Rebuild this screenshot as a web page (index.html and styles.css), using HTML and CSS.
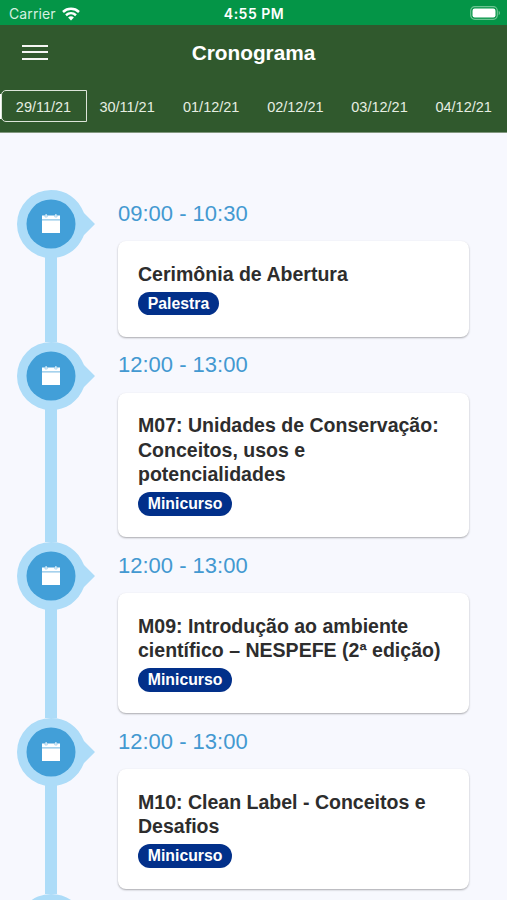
FILE: index.html
```html
<!DOCTYPE html>
<html lang="pt-BR">
<head>
    <meta charset="UTF-8">
    <meta name="viewport" content="width=device-width, initial-scale=1.0">
    <title>Cronograma</title>
    <link rel="stylesheet" href="styles.css">
</head>
<body>
    <svg class="sprite" width="0" height="0">
        <symbol id="marker" viewBox="0 0 80 68">
            <path fill="#addcf8" d="M34 0 C49 0 61 8 67 23 L78 34 L67 45 C61 60 49 68 34 68 A34 34 0 0 1 34 0 Z"/>
            <circle cx="34" cy="34" r="24.5" fill="#429fd8"/>
            <path fill="#fff" d="M25 25.4 H28.6 V24 H29.6 V25.4 H38.4 V24 H39.4 V25.4 H43 V29.2 H25 Z"/>
            <path fill="#b4d9ef" d="M25 29.2 H43 V30.4 H25 Z"/>
            <path fill="#fff" d="M25 30.4 H43 V43 H25 Z"/>
            <path fill="none" stroke="#8fc6e8" stroke-width="0.7" d="M28 25.4 V27 H30.2 V25.4 M37.8 25.4 V27 H40 V25.4"/>
        </symbol>
    </svg>

    <div class="status-bar">
        <div class="carrier">
            <span>Carrier</span>
            <svg width="18" height="14" viewBox="0 0 18 14" fill="none" stroke="#fff" stroke-width="2.5">
                <path d="M1 5 C5.5 0.8 12.5 0.8 17 5"/>
                <path d="M4 8.2 C7 5.5 11 5.5 14 8.2"/>
                <path d="M6.1 10.4 C7.8 9 10.2 9 11.9 10.4 L9 13.5 Z" fill="#fff" stroke="none"/>
            </svg>
        </div>
        <span class="clock">4:55 PM</span>
        <svg class="battery" width="31" height="14" viewBox="0 0 31 14">
            <rect x="0.7" y="0.7" width="26.6" height="12.6" rx="4" fill="none" stroke="#6cc492" stroke-width="1.2"/>
            <rect x="2.5" y="2.5" width="23" height="9" rx="2.2" fill="#fff"/>
            <path d="M28.7 4.8 C30.5 5.6 30.5 8.4 28.7 9.2 Z" fill="#6cc492"/>
        </svg>
    </div>

    <header>
        <div class="navbar">
            <div class="menu">
                <span></span>
                <span></span>
                <span></span>
            </div>
            <h1>Cronograma</h1>
        </div>
        <nav class="tabs">
            <a class="tab active">29/11/21</a>
            <a class="tab">30/11/21</a>
            <a class="tab">01/12/21</a>
            <a class="tab">02/12/21</a>
            <a class="tab">03/12/21</a>
            <a class="tab">04/12/21</a>
        </nav>
    </header>

    <main>
        <div class="event">
            <div class="rail"><svg class="marker"><use href="#marker"/></svg></div>
            <div class="info">
                <div class="time">09:00 - 10:30</div>
                <div class="card">
                    <h2>Cerimônia de Abertura</h2>
                    <span class="tag">Palestra</span>
                </div>
            </div>
        </div>
        <div class="event">
            <div class="rail"><svg class="marker"><use href="#marker"/></svg></div>
            <div class="info">
                <div class="time">12:00 - 13:00</div>
                <div class="card">
                    <h2>M07: Unidades de Conservação: Conceitos, usos e potencialidades</h2>
                    <span class="tag">Minicurso</span>
                </div>
            </div>
        </div>
        <div class="event">
            <div class="rail"><svg class="marker"><use href="#marker"/></svg></div>
            <div class="info">
                <div class="time">12:00 - 13:00</div>
                <div class="card">
                    <h2>M09: Introdução ao ambiente científico – NESPEFE (2ª edição)</h2>
                    <span class="tag">Minicurso</span>
                </div>
            </div>
        </div>
        <div class="event">
            <div class="rail"><svg class="marker"><use href="#marker"/></svg></div>
            <div class="info">
                <div class="time">12:00 - 13:00</div>
                <div class="card">
                    <h2>M10: Clean Label - Conceitos e Desafios</h2>
                    <span class="tag">Minicurso</span>
                </div>
            </div>
        </div>
        <div class="event">
            <div class="rail"><svg class="marker"><use href="#marker"/></svg></div>
        </div>
    </main>
</body>
</html>
```

FILE: styles.css
```css
* {
    box-sizing: border-box;
}
body {
    font-family: "Liberation Sans", Arial, sans-serif;
    margin: 0;
    height: 100vh;
    overflow: hidden;
    background-color: #f7f8fe;
    display: flex;
    flex-direction: column;
}
.sprite {
    position: absolute;
}
.status-bar {
    flex: none;
    height: 25px;
    padding: 2px 6px 0 9px;
    background-color: #049547;
    color: white;
    display: grid;
    grid-template-columns: 1fr auto 1fr;
    align-items: center;
    font-family: Inter, sans-serif;
    font-size: 14px;
}
.carrier {
    display: flex;
    align-items: center;
    gap: 6px;
    color: #d5f0e0;
    letter-spacing: 0.1px;
}
.clock {
    margin-right: 2px;
    font-size: 14px;
    font-weight: 600;
    letter-spacing: 0.5px;
}
.battery {
    justify-self: end;
    margin-top: -1px;
}
header {
    flex: none;
    height: 108px;
    background-color: #30592d;
    color: white;
    border-bottom: 1px solid #82987f;
}
.navbar {
    height: 54px;
    padding: 0 22px;
    display: grid;
    grid-template-columns: 1fr auto 1fr;
    align-items: center;
}
.menu {
    width: 26px;
    display: flex;
    flex-direction: column;
    gap: 4.5px;
}
.menu span {
    height: 2px;
    background-color: #f4f7f3;
}
h1 {
    margin: 0;
    padding-top: 2px;
    font-size: 20.8px;
}
.tabs {
    display: flex;
    align-items: center;
    margin-top: 11px;
    height: 32px;
    background: linear-gradient(white, white) 0 50% / 2px 25px no-repeat;
}
.tab {
    flex: none;
    width: 84.15px;
    padding-top: 2px;
    text-align: center;
    font-size: 14.5px;
    color: #e6eee2;
}
.tab.active {
    width: 86px;
    height: 32px;
    padding: 1px 1px 0 0;
    line-height: 31px;
    margin: 0 -2px 0 1px;
    border: 1.5px solid #dce5d9;
    border-radius: 5px 0 0 5px;
    background-color: #30592d;
}
main {
    flex: 1;
    min-height: 0;
    overflow: hidden;
    padding: 57.4px 38px 0 17px;
}
.event {
    display: flex;
    gap: 21px;
}
.rail {
    flex: none;
    width: 80px;
    background: linear-gradient(#addcf8, #addcf8) 28px 30px / 12px 100% no-repeat;
}
.marker {
    display: block;
    width: 80px;
    height: 68px;
}
.info {
    flex: 1;
    padding-bottom: 5px;
}
.time {
    height: 51px;
    padding-top: 10.6px;
    font-size: 22px;
    line-height: 25px;
    color: #4399d1;
}
.card {
    background-color: white;
    padding: 20.3px 20px 21.4px;
    border-radius: 8px;
    box-shadow: 0 1px 2px rgba(0,0,0,0.32);
}
h2 {
    margin: 0 0 5.7px;
    font-size: 19.55px;
    line-height: 24.5px;
    color: #2d2d2d;
}
.tag {
    display: block;
    width: fit-content;
    height: 23.6px;
    padding: 0 9.8px;
    border-radius: 12px;
    background-color: #02308a;
    color: white;
    font-size: 15.8px;
    font-weight: bold;
    line-height: 24px;
}
```
